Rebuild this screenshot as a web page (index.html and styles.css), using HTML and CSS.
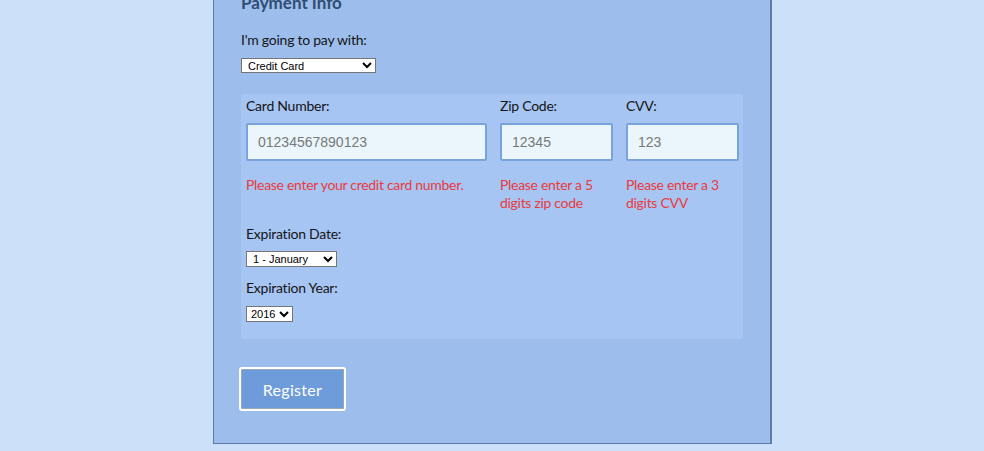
FILE: index.html
```html
<!DOCTYPE html>
<html>
<head>
<meta charset="utf-8">
<link rel="stylesheet" href="styles.css">
</head>
<body>
<form class="form">
  <h2 class="title">Payment Info</h2>
  <label class="lbl lbl-pay" for="pay">I'm going to pay with:</label>
  <select id="pay" class="sel sel-pay"><option>Credit Card</option></select>
  <div class="panel">
    <div class="grid">
      <div class="col">
        <label class="lbl">Card Number:</label>
        <input class="inp" type="text" placeholder="01234567890123">
        <p class="err">Please enter your credit card number.</p>
      </div>
      <div class="col">
        <label class="lbl">Zip Code:</label>
        <input class="inp" type="text" placeholder="12345">
        <p class="err">Please enter a 5 digits zip code</p>
      </div>
      <div class="col">
        <label class="lbl">CVV:</label>
        <input class="inp" type="text" placeholder="123">
        <p class="err">Please enter a 3 digits CVV</p>
      </div>
    </div>
    <label class="lbl lbl-exp">Expiration Date:</label>
    <select class="sel sel-month"><option>1 - January</option></select>
    <label class="lbl lbl-year">Expiration Year:</label>
    <select class="sel sel-year"><option>2016</option></select>
  </div>
  <button class="btn" type="button">Register</button>
</form>
</body>
</html>
```
FILE: styles.css
```css
html, body {
  margin: 0;
  padding: 0;
  background: #cce0f9;
  overflow: hidden;
}
body {
  font-family: "Lato", "Open Sans", sans-serif;
  color: #1b1b1b;
}
.form {
  display: flex;
  flex-direction: column;
  align-items: flex-start;
  width: 502px;
  margin: -7px auto 0;
  padding: 0 27px 32px;
  background: #9dbeed;
  border: 1px solid #5a7ea8;
  border-top: 0;
  box-shadow: 1px 1px 0 #5a7ea8;
}
.title {
  margin: 0;
  font-size: 17px;
  line-height: 20px;
  height: 20px;
  font-weight: 700;
  color: #2f4d70;
}
.lbl {
  display: block;
  font-size: 14px;
  line-height: 20px;
  letter-spacing: -0.25px;
  color: #141414;
}
.lbl-pay { margin-top: 17px; }
.sel {
  display: block;
  font-family: "Liberation Sans", Arial, sans-serif;
  font-size: 11px;
  color: #000;
  background: #fff;
  border: 1px solid #767676;
  border-radius: 0;
  padding: 0 0 0 2px;
  margin: 0;
}
.sel-pay { width: 135px; height: 15px; margin-top: 8px; }
.panel {
  align-self: stretch;
  margin-top: 21px;
  padding: 2px 4px 17px 5px;
  background: #a6c5f3;
  border-radius: 2px;
}
.grid {
  display: grid;
  grid-template-columns: 241px 113px 113px;
  column-gap: 13px;
}
.col { display: flex; flex-direction: column; }
.inp {
  box-sizing: border-box;
  height: 38px;
  width: 100%;
  margin-top: 7px;
  padding: 0 10px;
  background: #eaf6fc;
  border: 2px solid #7aa2dc;
  border-radius: 2px;
  font-family: "Liberation Sans", Arial, sans-serif;
  font-size: 14px;
  color: #333;
  outline: none;
}
.inp::placeholder { color: #787878; }
.err {
  margin: 15px 0 0;
  font-size: 14px;
  line-height: 18px;
  letter-spacing: -0.3px;
  color: #ea3a3c;
}
.lbl-exp { margin-top: 12px; }
.sel-month { width: 91px; height: 16px; margin-top: 7px; }
.lbl-year { margin-top: 11px; }
.sel-year { width: auto; height: 16px; margin-top: 8px; padding: 0; }
.btn {
  box-sizing: border-box;
  margin: 28px 0 0 -2px;
  width: 107px;
  height: 44px;
  background: #6e9cdb;
  border: 2px solid #fff;
  border-radius: 3px;
  box-shadow: inset 0 0 0 1px #9aa7b8;
  color: #fff;
  font-family: "Lato", "Open Sans", sans-serif;
  font-size: 16px;
  letter-spacing: 0.3px;
}
```
